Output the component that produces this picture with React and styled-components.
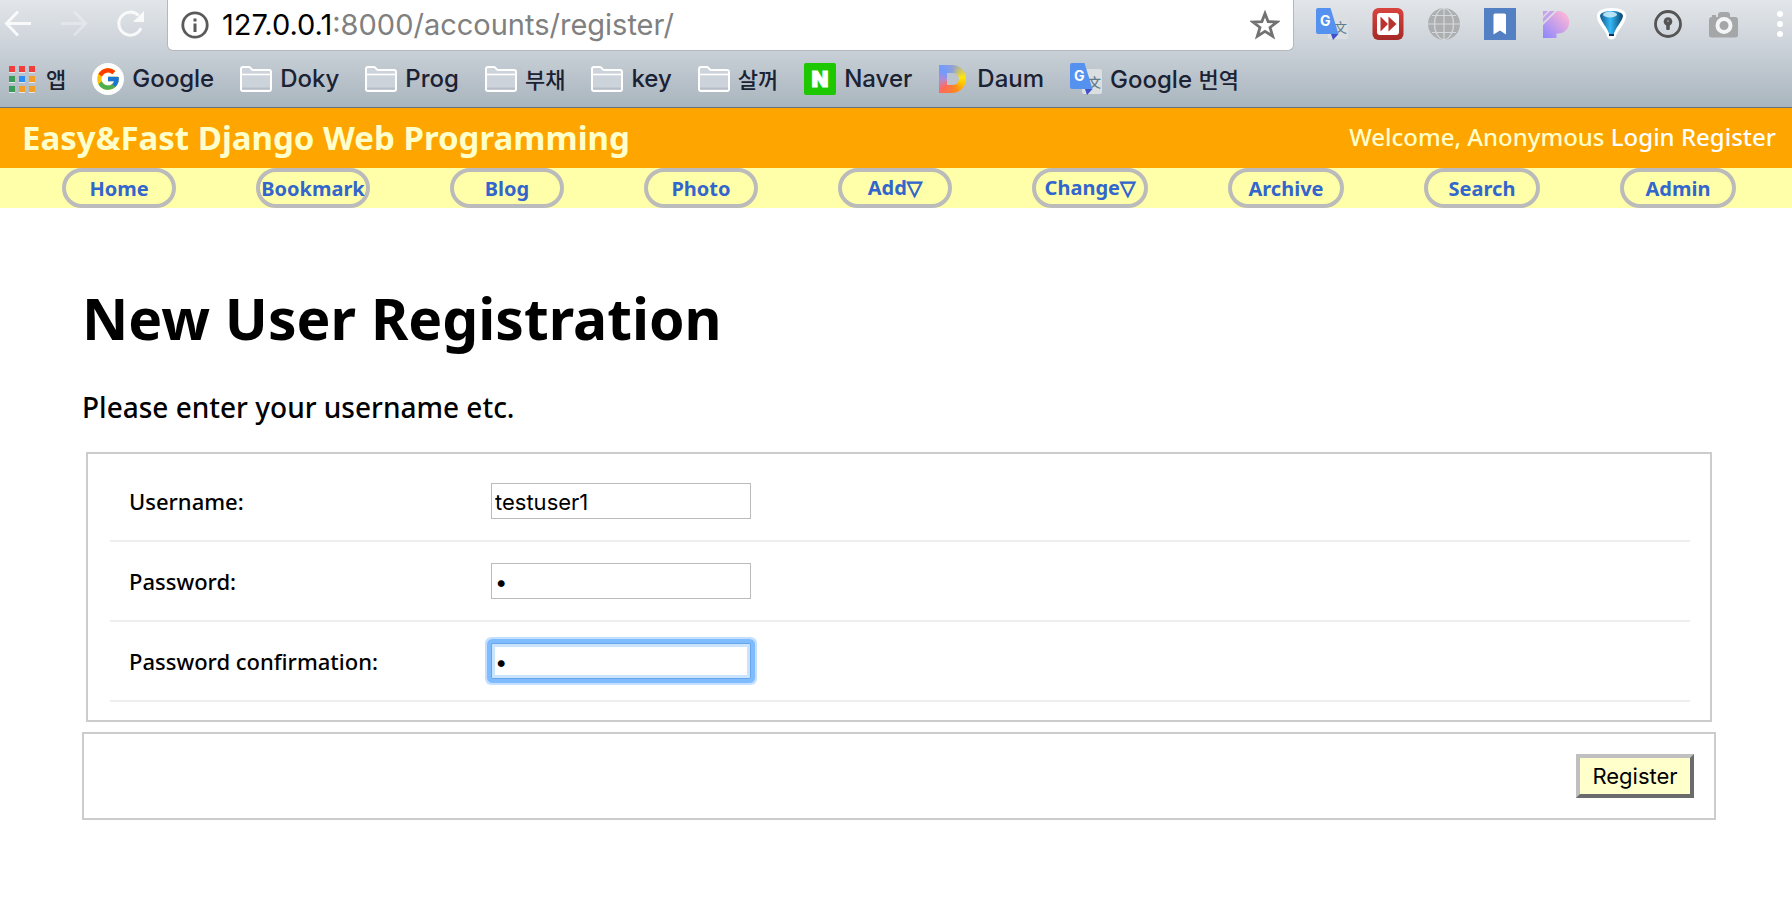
import React from "react";
import styled, { createGlobalStyle, css } from "styled-components";
import { FcGoogle } from "react-icons/fc";

const GlobalStyle = createGlobalStyle`
  *, *::before, *::after { box-sizing: border-box; }
  body {
    margin: 0;
    background: #fff;
    color: #000;
    font-family: "Lucida Grande", "Noto Sans", "Open Sans", "DejaVu Sans", sans-serif;
  }
  a { text-decoration: none; }
`;

const systemFont = css`
  font-family: Inter, Roboto, "Noto Sans CJK KR", sans-serif;
`;

/* ---------- browser frame ---------- */

const Browser = styled.div`
  ${systemFont}
  background: linear-gradient(#e2e6ea 0, #ccd2d9 46px, #a9b5be 107px);
  border-bottom: 1px solid #64717d;
`;

const Toolbar = styled.div`
  display: flex;
  align-items: flex-start;
  height: 51px;
`;

const NavButtons = styled.div`
  display: flex;
  gap: 28px;
  flex: none;
  width: 167px;
  padding: 10px 0 0 4px;
`;

const ToolButton = styled.button`
  display: block;
  flex: none;
  padding: 0;
  border: 0;
  background: none;
  line-height: 0;
  opacity: ${(p) => (p.$faint ? 0.3 : 0.85)};
`;

const AddressBar = styled.div`
  display: flex;
  align-items: center;
  flex: 1;
  min-width: 0;
  height: 51px;
  padding: 0 13px;
  background: #fff;
  border: 1px solid #b3b8bc;
  border-top: 0;
  border-radius: 0 0 6px 6px;
  line-height: 0;
`;

const Address = styled.div`
  flex: 1;
  padding-left: 13px;
  font-size: 29px;
  line-height: 32px;
  color: #808080;
  white-space: nowrap;
`;

const Host = styled.span`
  color: #000;
`;

const Extensions = styled.div`
  display: flex;
  align-items: center;
  flex: none;
  gap: 24px;
  padding: 8px 9px 0 22px;
`;

const Extension = styled.button`
  flex: none;
  padding: 0;
  border: 0;
  background: none;
  line-height: 0;

  &:last-child { margin-left: 13px; }
`;

const BookmarksBar = styled.nav`
  display: flex;
  align-items: center;
  gap: 26px;
  height: 56px;
  padding: 0 8px;
`;

const BookmarkLink = styled.a`
  display: flex;
  align-items: center;
  gap: 8px;
  flex: none;
  font-size: 24px;
  line-height: 32px;
  font-weight: 500;
  color: #1a2233;
  white-space: nowrap;
`;

const Hangul = styled.span`
  font-family: "Noto Sans CJK KR", sans-serif;
  font-size: 22px;
`;

const GoogleBadge = styled.span`
  display: grid;
  place-items: center;
  width: 32px;
  height: 32px;
  border-radius: 50%;
  background: #fff;
`;

const DaumMark = styled.span`
  display: grid;
  align-items: center;
  width: 27px;
  height: 28px;
  margin: 0 3px 0 1px;
  padding-left: 8px;
  border-radius: 0 14px 14px 0;
  background: conic-gradient(#8fa0d8, #ffe60a 80deg, #ffcc00 110deg, #ff8a1e 160deg, #ff6a5a 225deg, #b48ad0 265deg, #6f9bff 310deg, #8fa0d8);

  &::after {
    content: "";
    width: 12px;
    height: 12px;
    border-radius: 0 6px 6px 0;
    background: #bcc5cd;
  }
`;

const BackIcon = () => (
  <svg width="28" height="28" viewBox="0 0 28 28" fill="none" stroke="#fff" strokeWidth="3">
    <path d="M27 13.5H3M14 1.5L2.5 13.5L14 25.5" />
  </svg>
);

const ForwardIcon = () => (
  <svg width="28" height="28" viewBox="0 0 28 28" fill="none" stroke="#fff" strokeWidth="3">
    <path d="M1 13.5H25M14 1.5L25.5 13.5L14 25.5" />
  </svg>
);

const ReloadIcon = () => (
  <svg width="28" height="28" viewBox="0 0 28 28">
    <path d="M22.5 5.5A11.5 11.5 0 1 0 25 18" fill="none" stroke="#fff" strokeWidth="3" />
    <path d="M28 1V12H17Z" fill="#fff" />
  </svg>
);

const InfoIcon = () => (
  <svg width="28" height="28" viewBox="0 0 28 28">
    <circle cx="14" cy="14" r="12.2" fill="none" stroke="#5a5a5a" strokeWidth="2.8" />
    <rect x="12.5" y="7.5" width="3" height="3" fill="#5a5a5a" />
    <rect x="12.5" y="12.5" width="3" height="8.5" fill="#5a5a5a" />
  </svg>
);

const StarIcon = () => (
  <svg width="30" height="30" viewBox="0 0 30 30">
    <path
      d="M15 3.5L18.1 11.6L27 12L20 17.5L22.7 26.2L15 21.4L7.3 26.2L10 17.5L3 12L11.9 11.6Z"
      fill="none"
      stroke="#5a5a5a"
      strokeWidth="2.8"
    />
  </svg>
);

const FolderIcon = () => (
  <svg width="32" height="26" viewBox="0 0 32 26">
    <path d="M1 23V3Q1 1 3 1H9Q10 1 11 2.5T13 4H29Q31 4 31 6V23Q31 25 29 25H3Q1 25 1 23Z" fill="#cdd3da" stroke="#fff" strokeWidth="2" />
    <path d="M2 8.5H30" stroke="#fff" strokeWidth="1.6" />
    <path d="M2 22.5H30" stroke="#b7bec8" strokeWidth="2" />
  </svg>
);

const AppsIcon = () => (
  <svg width="30" height="28" viewBox="0 0 30 28">
    {[
      ["#f23d3d", "#f23d3d", "#f23d3d"],
      ["#3a9c58", "#2a8cf5", "#f0a029"],
      ["#3a9c58", "#f0a029", "#f0a029"],
    ].map((row, y) =>
      row.map((fill, x) => (
        <g key={`${x}-${y}`}>
          <rect x={1 + x * 10} y={7 + y * 10} width="6" height="1" fill="#e3e7ea" />
          <rect x={1 + x * 10} y={1 + y * 10} width="6" height="6" fill={fill} />
        </g>
      ))
    )}
  </svg>
);

const NaverIcon = () => (
  <svg width="32" height="32" viewBox="0 0 32 32">
    <rect width="32" height="32" rx="2" fill="#1ec800" />
    <text x="16" y="24" textAnchor="middle" fontFamily="Inter, sans-serif" fontWeight="900" fontSize="22" fill="#fff" stroke="#fff" strokeWidth="1">N</text>
  </svg>
);

const TranslateIcon = () => (
  <svg width="32" height="32" viewBox="0 0 32 32">
    <rect x="12" y="6" width="20" height="25" rx="2" fill="#dcdfe2" />
    <text x="18" y="24" fontFamily="Noto Sans CJK SC, sans-serif" fontSize="13" fill="#607d8b">文</text>
    <path d="M15 26H22.5L17 32Z" fill="#3f51c8" />
    <path d="M2 0H14.5L22.5 26H2Q0 26 0 24V2Q0 0 2 0Z" fill="#5592f0" />
    <text x="4" y="18" fontFamily="Inter, sans-serif" fontWeight="700" fontSize="14" fill="#fff">G</text>
  </svg>
);

const FastForwardIcon = () => (
  <svg width="32" height="32" viewBox="0 0 32 32">
    <defs>
      <linearGradient id="ffRed" x2="0" y2="1">
        <stop stopColor="#d8443e" />
        <stop offset="1" stopColor="#a52a28" />
      </linearGradient>
    </defs>
    <rect x="0.5" width="31" height="32" rx="6" fill="url(#ffRed)" />
    <rect x="5" y="5" width="22" height="22" rx="3" fill="#fff" />
    <path d="M8.5 8.5L16 16L8.5 23.5ZM16.5 8.5L24.5 16L16.5 23.5Z" fill="#b9332e" />
  </svg>
);

const GlobeIcon = () => (
  <svg width="32" height="32" viewBox="0 0 32 32">
    <circle cx="16" cy="16" r="16" fill="#acaeb0" />
    <g fill="none" stroke="#d5d9dd" strokeWidth="1.2">
      <path d="M16 0V32M0 16H32M4 7.5H28M4 24.5H28" />
      <ellipse cx="16" cy="16" rx="9.5" ry="15.5" />
    </g>
  </svg>
);

const BookmarkIcon = () => (
  <svg width="32" height="32" viewBox="0 0 32 32">
    <rect width="32" height="32" fill="#5280c2" />
    <path d="M9.5 7Q9.5 5.5 11 5.5H20.5Q22 5.5 22 7V26.5L16 22.5L9.5 26.5Z" fill="#fff" />
  </svg>
);

const PetalIcon = () => (
  <svg width="32" height="32" viewBox="0 0 32 32">
    <defs>
      <linearGradient id="petal" x1="1" y1="0" x2="0" y2="1">
        <stop offset="0.1" stopColor="#ffb6d6" />
        <stop offset="1" stopColor="#8a86ff" />
      </linearGradient>
    </defs>
    <path d="M18 3A11 11 0 0 1 18 25.5H16.5V30H3V17L17 3Z" fill="url(#petal)" />
    <path d="M3 3H8L3 8ZM10 3H14.5L3 14.5V10Z" fill="#c7a2ec" />
  </svg>
);

const BalloonIcon = () => (
  <svg width="32" height="32" viewBox="0 0 32 32">
    <defs>
      <linearGradient id="balloon">
        <stop stopColor="#12598e" />
        <stop offset="0.45" stopColor="#35b8f5" />
        <stop offset="1" stopColor="#07446f" />
      </linearGradient>
    </defs>
    <path d="M15.5 0C25 0 31 3 30 9C29 16 22 22 20 28Q19 31.5 15.5 31.5T11 28C10 22 1 16 1 9C0 3 7 0 15.5 0Z" fill="#fff" />
    <path d="M15.5 3C22 3 27 5 27 8C26 14 19 20 17.5 27H13.5C12 20 5 14 4 8C4 5 9 3 15.5 3Z" fill="url(#balloon)" />
    <ellipse cx="14" cy="6.5" rx="7" ry="3" fill="#d8f3ff" opacity=".8" />
    <path d="M13 26H18V28H13Z" fill="#063457" />
  </svg>
);

const KeyholeIcon = () => (
  <svg width="32" height="32" viewBox="0 0 32 32">
    <circle cx="16" cy="16" r="12.5" fill="none" stroke="#555" strokeWidth="2.8" />
    <circle cx="16" cy="13.5" r="4.3" fill="#555" />
    <rect x="14.2" y="14" width="3.6" height="8" rx="1" fill="#555" />
    <circle cx="16" cy="13" r="1.2" fill="#888" />
  </svg>
);

const CameraIcon = () => (
  <svg width="32" height="32" viewBox="0 0 32 32">
    <path d="M1 12Q1 9 4 9V7H8V9H10V7Q10 4 13 4H19Q22 4 22 7V9H27Q30 9 30 12V27Q30 29.5 27 29.5H4Q1 29.5 1 27Z" fill="#a5a6a7" />
    <circle cx="16" cy="17.5" r="6.5" fill="none" stroke="#f4f5f6" strokeWidth="4" />
  </svg>
);

const DotsIcon = () => (
  <svg width="6" height="32" viewBox="0 0 6 32" fill="#fff">
    <circle cx="3" cy="6" r="3" />
    <circle cx="3" cy="16" r="3" />
    <circle cx="3" cy="26" r="3" />
  </svg>
);

const extensions = [
  ["Translate", TranslateIcon],
  ["Playback speed", FastForwardIcon],
  ["Web", GlobeIcon],
  ["Bookmark", BookmarkIcon],
  ["Petal", PetalIcon],
  ["Balloon", BalloonIcon],
  ["Password manager", KeyholeIcon],
  ["Capture", CameraIcon],
  ["Menu", DotsIcon],
];

const bookmarks = [
  { icon: <AppsIcon />, hangul: "앱" },
  { icon: <GoogleBadge><FcGoogle size={26} /></GoogleBadge>, name: "Google" },
  { icon: <FolderIcon />, name: "Doky" },
  { icon: <FolderIcon />, name: "Prog" },
  { icon: <FolderIcon />, hangul: "부채" },
  { icon: <FolderIcon />, name: "key" },
  { icon: <FolderIcon />, hangul: "살꺼" },
  { icon: <NaverIcon />, name: "Naver" },
  { icon: <DaumMark />, name: "Daum" },
  { icon: <TranslateIcon />, name: "Google ", hangul: "번역" },
];

/* ---------- site ---------- */

const SiteHeader = styled.header`
  display: flex;
  align-items: center;
  justify-content: space-between;
  height: 60px;
  padding: 0 16px 0 22px;
  background: #ffa500;
  color: #ffffcc;
`;

const SiteTitle = styled.div`
  font-size: 33px;
  line-height: 40px;
  font-weight: 700;
`;

const Welcome = styled.div`
  padding-bottom: 2px;
  font-size: 24px;
  line-height: 32px;
  font-weight: 500;

  a { color: #fff; }
`;

const Menu = styled.nav`
  display: grid;
  grid-template-columns: repeat(5, 97fr) repeat(4, 98fr);
  padding: 0 16px 0 22px;
  background: #ffffaa;
`;

const MenuLink = styled.a`
  display: flex;
  align-items: center;
  justify-content: center;
  height: 40px;
  margin: 0 40px;
  padding-top: ${(p) => (p.$dropdown ? 0 : 2)}px;
  border: 4px solid #bbb;
  border-radius: 20px;
  font-size: 20px;
  line-height: 28px;
  font-weight: 700;
  color: #3366cc;
  white-space: nowrap;
`;

const Arrow = styled.span`
  font-family: "DejaVu Sans", sans-serif;
  font-weight: 700;
  -webkit-text-stroke: 1px #3366cc;
`;

const Main = styled.main`
  padding: 70px 76px 80px 82px;
`;

const Title = styled.h1`
  margin: 0;
  font-size: 57px;
  line-height: 80px;
  font-weight: 700;
`;

const Intro = styled.p`
  margin: 29px 0 25px;
  font-size: 28px;
  line-height: 40px;
  font-weight: 500;
`;

const Fields = styled.fieldset`
  margin: 0 4px 10px;
  padding: 8px 20px 18px 22px;
  border: 2px solid #ccc;
`;

const Row = styled.div`
  display: flex;
  align-items: center;
  height: 80px;
  padding-left: 19px;
  border-bottom: 2px solid #eee;
`;

const Label = styled.label`
  width: 362px;
  font-size: 22px;
  line-height: 32px;
  font-weight: 500;
`;

const Input = styled.input`
  ${systemFont}
  width: 260px;
  height: 36px;
  padding: 3px 3px 1px;
  border: 1px solid #bbb;
  border-radius: 0;
  outline: 0;
  font-size: 22px;
  color: #000;
  ${(p) =>
    p.$active &&
    css`
      border-color: #69a5ea;
      border-radius: 2px;
      box-shadow: 0 0 0 4px #7fbcff, 0 0 0 6px #c4e0fe, inset 0 0 0 3px #cbe4fe;
    `}
`;

const SubmitRow = styled.div`
  display: flex;
  justify-content: flex-end;
  padding: 20px;
  border: 2px solid #ccc;
`;

const Submit = styled.button`
  ${systemFont}
  min-width: 118px;
  height: 44px;
  padding: 0 12px;
  border: 4px solid;
  border-color: #c0c0c0 #6b6b6b #6b6b6b #c0c0c0;
  border-radius: 0;
  background: #ffffcc;
  font-size: 22px;
  line-height: 32px;
  color: #000;
`;

const menu = [
  { name: "Home" },
  { name: "Bookmark" },
  { name: "Blog" },
  { name: "Photo" },
  { name: "Add", dropdown: true },
  { name: "Change", dropdown: true },
  { name: "Archive" },
  { name: "Search" },
  { name: "Admin" },
];

const fields = [
  { id: "username", label: "Username:", type: "text", value: "testuser1" },
  { id: "password1", label: "Password:", type: "password", value: "1" },
  { id: "password2", label: "Password confirmation:", type: "password", value: "1", active: true },
];

export default function App() {
  return (
    <>
      <GlobalStyle />
      <Browser>
        <Toolbar>
          <NavButtons>
            <ToolButton aria-label="Back"><BackIcon /></ToolButton>
            <ToolButton aria-label="Forward" $faint><ForwardIcon /></ToolButton>
            <ToolButton aria-label="Reload"><ReloadIcon /></ToolButton>
          </NavButtons>
          <AddressBar>
            <InfoIcon />
            <Address><Host>127.0.0.1</Host>:8000/accounts/register/</Address>
            <ToolButton aria-label="Bookmark this page"><StarIcon /></ToolButton>
          </AddressBar>
          <Extensions>
            {extensions.map(([name, Icon]) => (
              <Extension key={name} aria-label={name}><Icon /></Extension>
            ))}
          </Extensions>
        </Toolbar>
        <BookmarksBar aria-label="Bookmarks">
          {bookmarks.map((b, i) => (
            <BookmarkLink href="#" key={i}>
              {b.icon}
              <span>{b.name}{b.hangul && <Hangul>{b.hangul}</Hangul>}</span>
            </BookmarkLink>
          ))}
        </BookmarksBar>
      </Browser>

      <SiteHeader>
        <SiteTitle>Easy&amp;Fast Django Web Programming</SiteTitle>
        <Welcome>
          Welcome, Anonymous <a href="#">Login</a> <a href="#">Register</a>
        </Welcome>
      </SiteHeader>
      <Menu aria-label="Site">
        {menu.map(({ name, dropdown }) => (
          <MenuLink href="#" key={name} $dropdown={dropdown}>
            {name}{dropdown && <Arrow>▽</Arrow>}
          </MenuLink>
        ))}
      </Menu>

      <Main>
        <Title>New User Registration</Title>
        <Intro>Please enter your username etc.</Intro>
        <form onSubmit={(e) => e.preventDefault()}>
          <Fields>
            {fields.map((f) => (
              <Row key={f.id}>
                <Label htmlFor={f.id}>{f.label}</Label>
                <Input id={f.id} type={f.type} defaultValue={f.value} $active={f.active} />
              </Row>
            ))}
          </Fields>
          <SubmitRow>
            <Submit type="submit">Register</Submit>
          </SubmitRow>
        </form>
      </Main>
    </>
  );
}
